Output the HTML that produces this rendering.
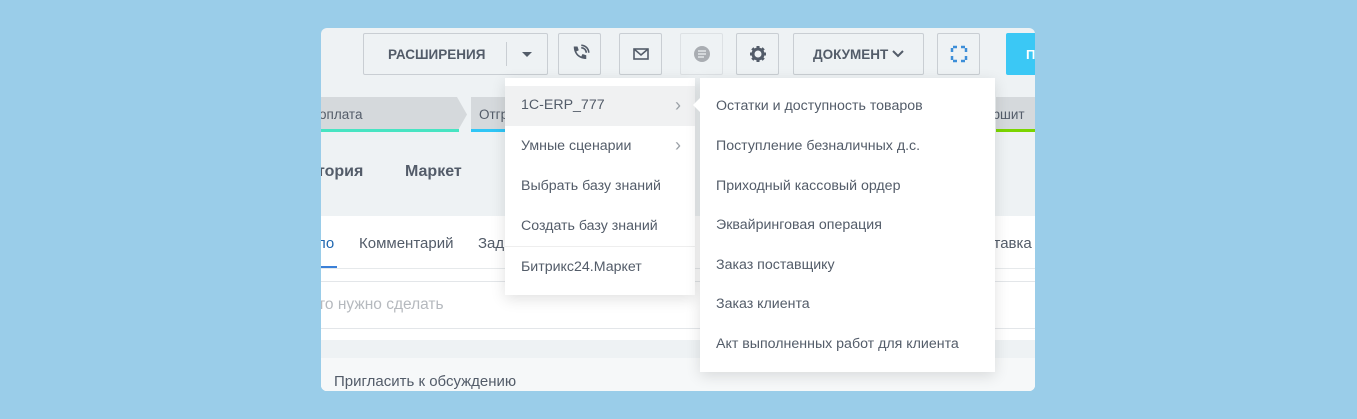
<!DOCTYPE html><html><head><meta charset="utf-8"><style>
*{box-sizing:border-box;margin:0;padding:0}
body{width:1357px;height:419px;background:#9acde9;font-family:"Liberation Sans",sans-serif;position:relative;overflow:hidden}
.card{position:absolute;left:321px;top:28px;width:714px;height:363px;background:#eef2f4;border-radius:6px;overflow:hidden}
.a{position:absolute}
.btn{position:absolute;top:5px;height:42px;border:1px solid #c9ced3;border-radius:2px;background:#eef2f4;display:flex;align-items:center;justify-content:center;color:#535c69;font-weight:bold;font-size:13.5px}
.m{position:absolute;background:#fff;box-shadow:0 4px 14px rgba(0,0,0,.12);font-size:14.2px;color:#535c69}
.m div{position:absolute;left:16px}
.ar{color:#9aa0a6;font-size:18px}
</style></head><body>
<div class="card">
 <div class="btn" style="left:42px;width:185px;justify-content:flex-start;padding-left:24px">РАСШИРЕНИЯ<span class="a" style="left:142px;top:8px;height:24px;border-left:1px solid #c9ced3"></span><span class="a" style="left:158px;top:18px;border:5px solid transparent;border-top-color:#535c69"></span></div>
 <div class="btn" style="left:237px;width:43px"><svg width="20" height="20" viewBox="0 0 16 16"><path d="M3 2l3 0 1 3-2 1c1 2 2 3 4 4l1-2 3 1v3c-6 0-10-4-10-10z" fill="#535c69"/><path d="M9 3a4 4 0 0 1 4 4M9 1a6 6 0 0 1 6 6" stroke="#535c69" fill="none" stroke-width="1.3"/></svg></div>
 <div class="btn" style="left:298px;width:43px"><svg width="16" height="12"><rect x="1" y="1" width="14" height="10" fill="none" stroke="#535c69" stroke-width="1.6"/><path d="M1 1l7 6 7-6" fill="none" stroke="#535c69" stroke-width="1.6"/></svg></div>
 <div class="btn" style="left:359px;width:43px;border-color:#dde1e4"><svg width="18" height="18"><circle cx="9" cy="9" r="8" fill="#a9adb2"/><path d="M5 6h8M5 9h8M5 12h6" stroke="#eef2f4" stroke-width="1.3"/></svg></div>
 <div class="btn" style="left:415px;width:43px"><svg width="18" height="18" viewBox="0 0 18 18"><circle cx="9" cy="9" r="5" fill="none" stroke="#535c69" stroke-width="3"/><path d="M9 1v4M9 13v4M1 9h4M13 9h4M3.3 3.3l2.8 2.8M11.9 11.9l2.8 2.8M3.3 14.7l2.8-2.8M11.9 6.1l2.8-2.8" stroke="#535c69" stroke-width="3"/></svg></div>
 <div class="btn" style="left:472px;width:131px">ДОКУМЕНТ&nbsp;<svg width="12" height="8"><path d="M1 1l5 5 5-5" fill="none" stroke="#535c69" stroke-width="2"/></svg></div>
 <div class="btn" style="left:616px;width:43px"><svg width="20" height="20"><path d="M3 8V3h5M12 3h5v5M17 12v5h-5M8 17H3v-5" fill="none" stroke="#3c8ed8" stroke-width="2.5" stroke-dasharray="4 2"/></svg></div>
 <div class="a" style="left:685px;top:5px;width:40px;height:42px;background:#3bc8f5;border-radius:2px;color:#fff;font-weight:bold;font-size:13px;padding:14px 0 0 20px">П</div>
 <div class="a" style="left:0;top:69px;width:146px;height:35px;background:#d5d9dc;clip-path:polygon(0 0,136px 0,146px 50%,136px 100%,0 100%)"></div>
 <div class="a" style="left:0;top:101px;width:138px;height:3px;background:#47e4c2"></div>
 <div class="a" style="left:-2px;top:79px;font-size:13.5px;color:#535c69">оплата</div>
 <div class="a" style="left:150px;top:69px;width:60px;height:35px;background:#d5d9dc"></div>
 <div class="a" style="left:150px;top:101px;width:60px;height:3px;background:#2fc6f6"></div>
 <div class="a" style="left:158px;top:79px;font-size:13.5px;color:#535c69">Отгр</div>
 <div class="a" style="left:675px;top:69px;width:40px;height:35px;background:#d5d9dc"></div>
 <div class="a" style="left:675px;top:101px;width:40px;height:3px;background:#7bd500"></div>
 <div class="a" style="left:664px;top:79px;font-size:13.5px;color:#535c69">ершит</div>
 <div class="a" style="left:-4px;top:135px;font-size:16px;font-weight:bold;color:#535c69">тория</div>
 <div class="a" style="left:84px;top:135px;font-size:16px;font-weight:bold;color:#535c69">Маркет</div>
 <div class="a" style="left:0;top:188px;width:714px;height:175px;background:#fff"></div>
 <div class="a" style="left:0;top:240px;width:714px;height:1px;background:#e6e9eb"></div>
 <div class="a" style="left:-4px;top:207px;font-size:15px;color:#2067b0">ло</div>
 <div class="a" style="left:0;top:238px;width:16px;height:2px;background:#3b80d8"></div>
 <div class="a" style="left:38px;top:207px;font-size:15px;color:#535c69">Комментарий</div>
 <div class="a" style="left:157px;top:207px;font-size:15px;color:#535c69">Зад</div>
 <div class="a" style="left:665px;top:207px;font-size:15px;color:#535c69">ставка</div>
 <div class="a" style="left:0;top:253px;width:714px;height:48px;border-top:1px solid #e3e6e9;border-bottom:1px solid #e3e6e9"></div>
 <div class="a" style="left:-3px;top:268px;font-size:15.5px;color:#b5b9be">то нужно сделать</div>
 <div class="a" style="left:0;top:312px;width:714px;height:51px;background:#eef2f4"></div>
 <div class="a" style="left:0;top:330px;width:714px;height:33px;background:#f6f8f9"></div>
 <div class="a" style="left:13px;top:345px;font-size:15px;color:#535c69">Пригласить к обсуждению</div>
</div>
<div class="m" style="left:505px;top:78px;width:190px;height:217px">
 <div style="left:0;top:8px;width:190px;height:40px;background:#f0f1f2"></div>
 <div style="top:19px">1C-ERP_777</div><div class="ar" style="left:170px;top:17px">›</div>
 <div style="top:60px">Умные сценарии</div><div class="ar" style="left:170px;top:57px">›</div>
 <div style="top:100px">Выбрать базу знаний</div>
 <div style="top:140px">Создать базу знаний</div>
 <div style="left:0;top:168px;width:190px;height:1px;background:#eee"></div>
 <div style="top:181px">Битрикс24.Маркет</div>
</div>
<div class="m" style="left:700px;top:78px;width:295px;height:294px">
 <div style="left:-7px;top:20px;width:0;height:0;border:7px solid transparent;border-right-color:#fff;border-left:0"></div>
 <div style="top:20px">Остатки и доступность товаров</div>
 <div style="top:60px">Поступление безналичных д.с.</div>
 <div style="top:100px">Приходный кассовый ордер</div>
 <div style="top:139px">Эквайринговая операция</div>
 <div style="top:179px">Заказ поставщику</div>
 <div style="top:218px">Заказ клиента</div>
 <div style="top:258px">Акт выполненных работ для клиента</div>
</div>
</body></html>
